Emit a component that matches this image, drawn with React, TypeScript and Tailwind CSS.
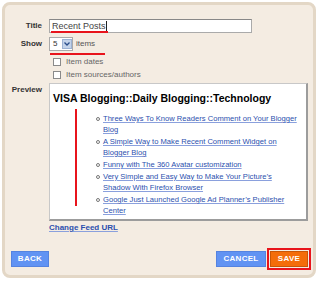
import React from 'react';

const posts = [
  ['Three Ways To Know Readers Comment on Your Blogger', 'Blog'],
  ['A Simple Way to Make Recent Comment Widget on', 'Blogger Blog'],
  ['Funny with The 360 Avatar customization'],
  ['Very Simple and Easy Way to Make Your Picture\u2019s', 'Shadow With Firefox Browser'],
  ['Google Just Launched Google Ad Planner\u2019s Publisher', 'Center'],
];

const sans = "font-['Liberation_Sans',Arial,sans-serif]";

const Label: React.FC<{ children: React.ReactNode }> = ({ children }) => (
  <div className="w-[37px] shrink-0 text-right text-[8px] font-bold leading-[14px] text-[#333]">{children}</div>
);

const Check: React.FC<{ label: string }> = ({ label }) => (
  <div className="flex items-center gap-[5px] h-[13px]">
    <span className="w-[8px] h-[8px] border border-[#8a8a8a] bg-white" />
    <span className="text-[8px] text-[#666]">{label}</span>
  </div>
);

const App: React.FC = () => (
  <div className={`w-[320px] h-[282px] bg-white p-[2px] ${sans}`}>
    <div className="h-[276px] w-[314px] rounded-[8px] border-[3px] border-[#e3d7c6] bg-[#f4ece2] flex flex-col pt-[14px]">
      {/* title */}
      <div className="flex items-center gap-[7px]">
        <Label>Title</Label>
        <div className="relative w-[203px] h-[14px] border border-[#aaa] border-t-[#888] bg-white flex items-center pl-[2px]">
          <span className="text-[9px] text-[#444] leading-none">Recent Posts</span>
          <span className="w-px h-[10px] bg-[#222]" />
          <span className="absolute left-[1px] top-[11px] w-[57px] h-[2px] bg-[#e8141c]" />
        </div>
      </div>

      {/* show */}
      <div className="relative flex items-center gap-[7px] mt-[4px]">
        <Label>Show</Label>
        <div className="w-[24px] h-[14px] border border-[#aaa] bg-white flex items-center">
          <span className="text-[8px] text-[#333] pl-[3px] w-[12px]">5</span>
          <span className="w-[10px] h-[10px] bg-[#c3d3ea] border border-[#9cb2d4] flex items-center justify-center">
            <svg width="6" height="4" viewBox="0 0 6 4">
              <path d="M0.5 0.5 L3 3 L5.5 0.5" fill="none" stroke="#2a4d8a" strokeWidth="1.3" />
            </svg>
          </span>
        </div>
        <span className="text-[8px] text-[#555] -ml-[4px]">items</span>
        <span className="absolute left-[45px] top-[16px] w-[55px] h-[2px] bg-[#e8141c]" />
      </div>

      <div className="pl-[48px] mt-[4px] flex flex-col">
        <Check label="Item dates" />
        <Check label="Item sources/authors" />
      </div>

      {/* preview */}
      <div className="flex gap-[7px] mt-[2px]">
        <Label>Preview</Label>
        <div className="flex flex-col">
          <div className="w-[259px] h-[138px] bg-white border border-[#c8c8c8] border-r-2 border-b-2 border-r-[#9c9c9c] border-b-[#9c9c9c] pl-[3px] pt-[7px]">
            <div className="text-[10.5px] font-bold text-black leading-[14px] whitespace-nowrap">VISA Blogging::Daily Blogging::Technology</div>
            <div className="flex mt-[4px]">
              <div className="w-[2px] h-[97px] bg-[#e8141c] ml-[22px]" />
              <ul className="ml-[19px] mt-[4px] flex flex-col gap-[1px]">
                {posts.map((lines) => (
                  <li key={lines[0]} className="flex gap-[3px]">
                    <span className="mt-[4px] w-[4px] h-[4px] rounded-full border border-[#777] shrink-0" />
                    <a className="text-[7.6px] leading-[11px] text-[#2b4fae] underline decoration-[#8aa0dd] whitespace-nowrap">
                      {lines.map((l, i) => (
                        <div key={i}>{l}</div>
                      ))}
                    </a>
                  </li>
                ))}
              </ul>
            </div>
          </div>
          <a className="mt-[1px] text-[8px] font-bold text-[#2b4fae] underline decoration-[#8aa0dd] leading-[11px]">Change Feed URL</a>
        </div>
      </div>

      {/* buttons */}
      <div className="mt-auto mb-[5px] flex items-center pl-[6px] pr-[2px]">
        <button className="w-[38px] h-[16px] bg-[#6193f3] border border-[#5583e0] text-white text-[8px] font-bold tracking-[0.3px]">BACK</button>
        <div className="ml-auto flex items-center gap-[1px]">
          <button className="w-[50px] h-[16px] bg-[#6193f3] border border-[#5583e0] text-white text-[8px] font-bold tracking-[0.3px]">CANCEL</button>
          <div className="flex p-[1px] border-2 border-[#e8141c]">
            <button className="w-[38px] h-[16px] bg-[#f46d0a] border border-[#c95606] text-white text-[8px] font-bold tracking-[0.3px]">SAVE</button>
          </div>
        </div>
      </div>
    </div>
  </div>
);

export default App;
